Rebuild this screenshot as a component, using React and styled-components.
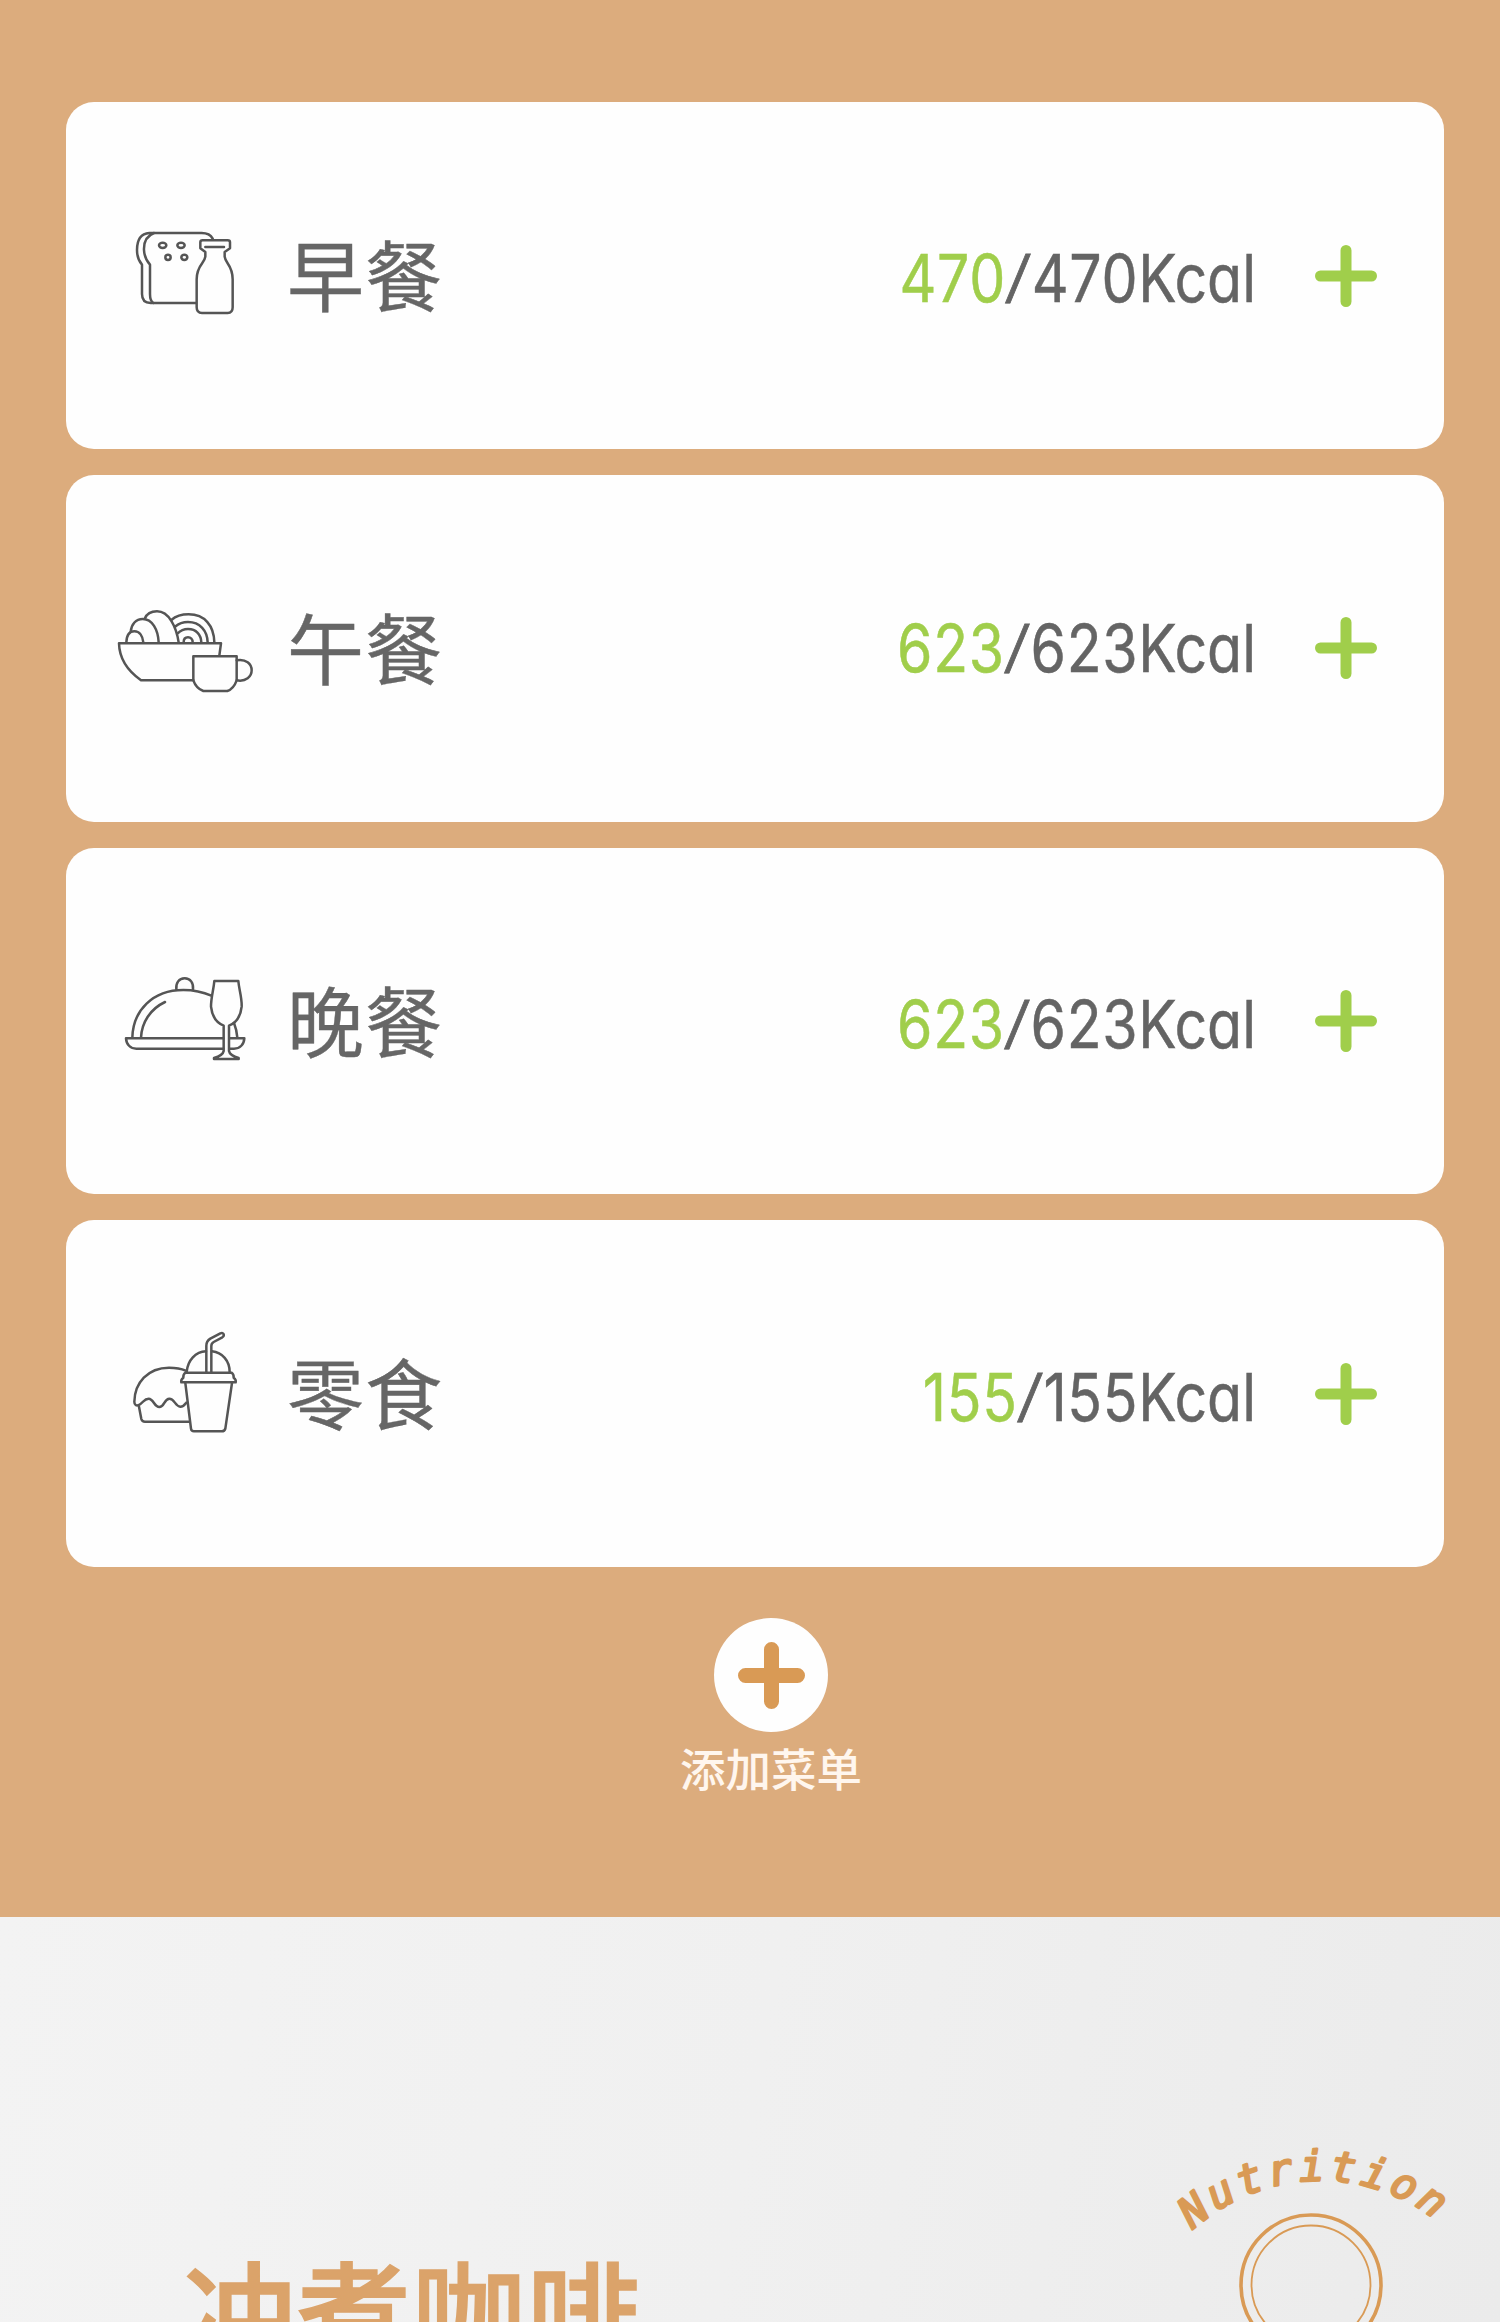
import styled, { createGlobalStyle } from "styled-components";

const GlobalStyle = createGlobalStyle`
  * {
    box-sizing: border-box;
  }

  body {
    margin: 0;
    font-family: "Noto Sans CJK SC", sans-serif;
  }
`;

const Page = styled.div`
  display: flex;
  flex-direction: column;
  width: 1500px;
  height: 2322px;
  overflow: hidden;
`;

const MealSection = styled.section`
  display: flex;
  flex-direction: column;
  align-items: center;
  height: 1917px;
  flex-shrink: 0;
  padding: 102.4px 56px 0 66px;
  background: #dcac7d;
`;

const MealList = styled.div`
  display: flex;
  flex-direction: column;
  gap: 26px;
  width: 100%;
`;

const MealCard = styled.div`
  display: flex;
  align-items: center;
  height: 346.7px;
  padding: 0 67px 0 44px;
  border-radius: 28px;
  background: #fefefe;
`;

const MealIcon = styled.svg`
  width: 145px;
  height: 140px;
  flex-shrink: 0;
  fill: none;
  stroke: #555;
  stroke-width: 7.5;
  stroke-linejoin: round;
  stroke-linecap: round;
`;

const MealName = styled.h2`
  margin: -5px 0 0 32px;
  font-size: 77px;
  font-weight: 400;
  line-height: 100px;
  letter-spacing: 1px;
  color: #666;
  -webkit-text-stroke: 0.4px #666;
`;

const Calories = styled.div`
  flex: 1;
  padding-top: ${(props) => props.$drop}px;
  font-family: Inter, sans-serif;
  font-feature-settings: "cv11";
  font-size: 66.5px;
  line-height: 80px;
  text-align: right;
  white-space: nowrap;
  color: #646464;
  -webkit-text-stroke: 0.5px currentColor;
  transform: scaleX(0.86);
  transform-origin: right;
`;

const Amount = styled.span`
  letter-spacing: 0.8px;
  color: ${(props) => (props.$eaten ? "#a0ce4b" : "inherit")};
  -webkit-text-stroke-color: currentColor;
`;

const Slash = styled.span`
  display: inline-block;
  margin: 0 2px 0 4px;
  -webkit-text-stroke-width: 1px;
  transform: scaleY(0.85) skewX(-8deg);
  transform-origin: 50% 36%;
`;

const Plus = styled.svg`
  width: ${(props) => props.$size}px;
  height: ${(props) => props.$size}px;
  flex-shrink: 0;
  stroke: ${(props) => props.$color};
  stroke-linecap: round;
`;

const AddMeal = styled(Plus)`
  margin-left: 59px;
`;

const AddMenu = styled.div`
  display: flex;
  flex-direction: column;
  align-items: center;
  margin: 51px 0 0 32px;
`;

const AddCircle = styled.div`
  display: flex;
  align-items: center;
  justify-content: center;
  width: 114px;
  height: 114px;
  padding-left: 2px;
  border-radius: 50%;
  background: #fefefe;
`;

const AddLabel = styled.span`
  margin-top: 5px;
  font-size: 45.5px;
  font-weight: 500;
  line-height: 60px;
  color: #fff6ee;
`;

const CoffeeSection = styled.section`
  display: flex;
  justify-content: space-between;
  height: 405px;
  flex-shrink: 0;
  padding: 203px 30px 0 182px;
  overflow: hidden;
  background: linear-gradient(100deg, #f3f3f3 0%, #f0f0f0 50%, #ebebeb 100%);
`;

const CoffeeTitle = styled.h1`
  margin: 119px 0 0;
  font-size: 114px;
  font-weight: 500;
  line-height: 140px;
  letter-spacing: 1px;
  white-space: nowrap;
  color: #dba36a;
  -webkit-text-stroke: 1.6px #dba36a;
`;

const Badge = styled.svg`
  width: 310px;
  height: 202px;
  flex-shrink: 0;
  fill: none;
  stroke: #d99a55;
`;

const BadgeText = styled.text`
  font-family: "DejaVu Sans Mono", monospace;
  font-size: 42px;
  font-style: italic;
  letter-spacing: 4.4px;
  fill: #d99a55;
  stroke-width: 2.4;
  stroke-linejoin: round;
`;

function BreakfastIcon() {
  return (
    <MealIcon viewBox="180 348 435 420">
      <path d="M488 446C482 434 470 429 455 429H298C272 431 261 450 261 480C261 500 267 514 276 524V612C276 631 284 639 302 639H438" />
      <path d="M312 429C291 437 281 455 282 480C283 502 290 513 300 524V612C300 627 303 635 310 639" />
      <ellipse cx="338" cy="466" rx="11" ry="8" />
      <ellipse cx="393" cy="466" rx="11" ry="8" />
      <ellipse cx="354" cy="502" rx="8" ry="8" />
      <ellipse cx="403" cy="502" rx="9" ry="8" />
      <path d="M451 457Q451 451 458 451H533Q540 451 540 457V475L524 486V500C526 520 548 525 548 568V652Q548 669 533 669H456Q440 669 440 652V568C440 525 464 520 466 500V486L451 475Z" />
      <path d="M466 471H522" />
    </MealIcon>
  );
}

function LunchIcon() {
  return (
    <MealIcon viewBox="30 -35 435 420">
      <path d="M280 272H123C92 250 58 216 57 161H363L358 198" />
      <path d="M79 158C80 138 88 125 103 125C119 125 128 140 130 158" />
      <path d="M92 127C94 103 108 88 128 88C157 88 174 120 176 158" />
      <path d="M134 87C140 73 153 65 171 65C207 65 229 112 236 158" />
      <path d="M214 91C228 79 246 74 266 74C314 74 342 108 343 158" />
      <path d="M225 111C237 101 249 97 264 97C300 97 322 123 323 158" />
      <path d="M233 131C242 122 252 118 264 118C289 118 303 135 304 158" />
      <path d="M251 158C251 148 256 143 264 143C272 143 278 149 278 158" />
      <path d="M280 200H410V272C404 289 396 299 382 304H310C296 299 286 289 280 272Z" />
      <path d="M410 212C438 207 455 223 455 242C455 261 438 277 410 272" />
    </MealIcon>
  );
}

function DinnerIcon() {
  return (
    <MealIcon viewBox="30 4 435 420">
      <path d="M229 120C227 99 237 86 254 86C271 86 281 99 279 120" />
      <path d="M97 264C99 182 158 121 250 121C281 121 309 127 334 138M402 220Q410 240 412 264" />
      <path d="M123 264C125 218 151 178 195 157" />
      <path d="M370 266H78C79 284 91 297 109 297H370M388 266H433C432 284 420 297 402 297H388" />
      <path d="M343 94H415C417 120 426 142 425 171C422 199 407 220 387 228V304C389 316 402 321 416 325V328H342V325C356 321 369 316 371 304V228C349 219 336 199 333 171C333 142 341 120 343 94Z" />
    </MealIcon>
  );
}

function SnackIcon() {
  return (
    <MealIcon viewBox="30 40 435 420">
      <path d="M257 180C244 174 228 171 207 171C143 171 104 217 103 273C103 283 109 286 117 283C130 276 132 264 146 264C161 264 162 289 178 289C194 289 192 264 208 264C224 264 225 287 241 288C251 288 254 283 259 276" />
      <path d="M117 288L124 325Q126 333 135 333H268" />
      <path d="M260 184C263 148 287 123 318 122M336 122C367 125 389 151 389 184" />
      <path d="M319 184V105C319 94 323 89 331 84L361 68Q369 65 371 71Q373 76 367 80L341 94Q334 98 334 106V184" />
      <path d="M256 186H395Q402 192 401 201Q409 207 407 215H244Q242 207 250 201Q249 192 256 186Z" />
      <path d="M256 217L273 354Q274 362 282 362H365Q374 362 376 354L396 217" />
    </MealIcon>
  );
}

const meals = [
  { name: "早餐", eaten: 470, goal: 470, drop: 5, icon: BreakfastIcon },
  { name: "午餐", eaten: 623, goal: 623, drop: -8, icon: LunchIcon },
  { name: "晚餐", eaten: 623, goal: 623, drop: 5, icon: DinnerIcon },
  { name: "零食", eaten: 155, goal: 155, drop: 6, icon: SnackIcon },
];

export default function App() {
  return (
    <Page>
      <GlobalStyle />
      <MealSection>
        <MealList>
          {meals.map(({ name, eaten, goal, drop, icon: Icon }) => (
            <MealCard key={name}>
              <Icon />
              <MealName>{name}</MealName>
              <Calories $drop={drop}>
                <Amount $eaten>{eaten}</Amount>
                <Slash>/</Slash>
                <Amount>{goal}</Amount>Kcal
              </Calories>
              <AddMeal $size={62} $color="#a0ce4b" viewBox="0 0 62 62">
                <path d="M31 5.5V56.5M5.5 31H56.5" strokeWidth="11" />
              </AddMeal>
            </MealCard>
          ))}
        </MealList>
        <AddMenu>
          <AddCircle>
            <Plus $size={67} $color="#d99a55" viewBox="0 0 67 67">
              <path d="M33.5 7.5V59.5M7.5 33.5H59.5" strokeWidth="15" />
            </Plus>
          </AddCircle>
          <AddLabel>添加菜单</AddLabel>
        </AddMenu>
      </MealSection>
      <CoffeeSection>
        <CoffeeTitle>冲煮咖啡</CoffeeTitle>
        <Badge viewBox="0 0 310 202">
          <path id="badge-arc" d="M33 110A189 189 0 0 1 296 118" stroke="none" />
          <BadgeText>
            <textPath href="#badge-arc">Nutrition</textPath>
          </BadgeText>
          <circle cx="151" cy="165" r="70" strokeWidth="3.6" />
          <circle cx="151" cy="165" r="59.5" strokeWidth="1.8" />
        </Badge>
      </CoffeeSection>
    </Page>
  );
}
